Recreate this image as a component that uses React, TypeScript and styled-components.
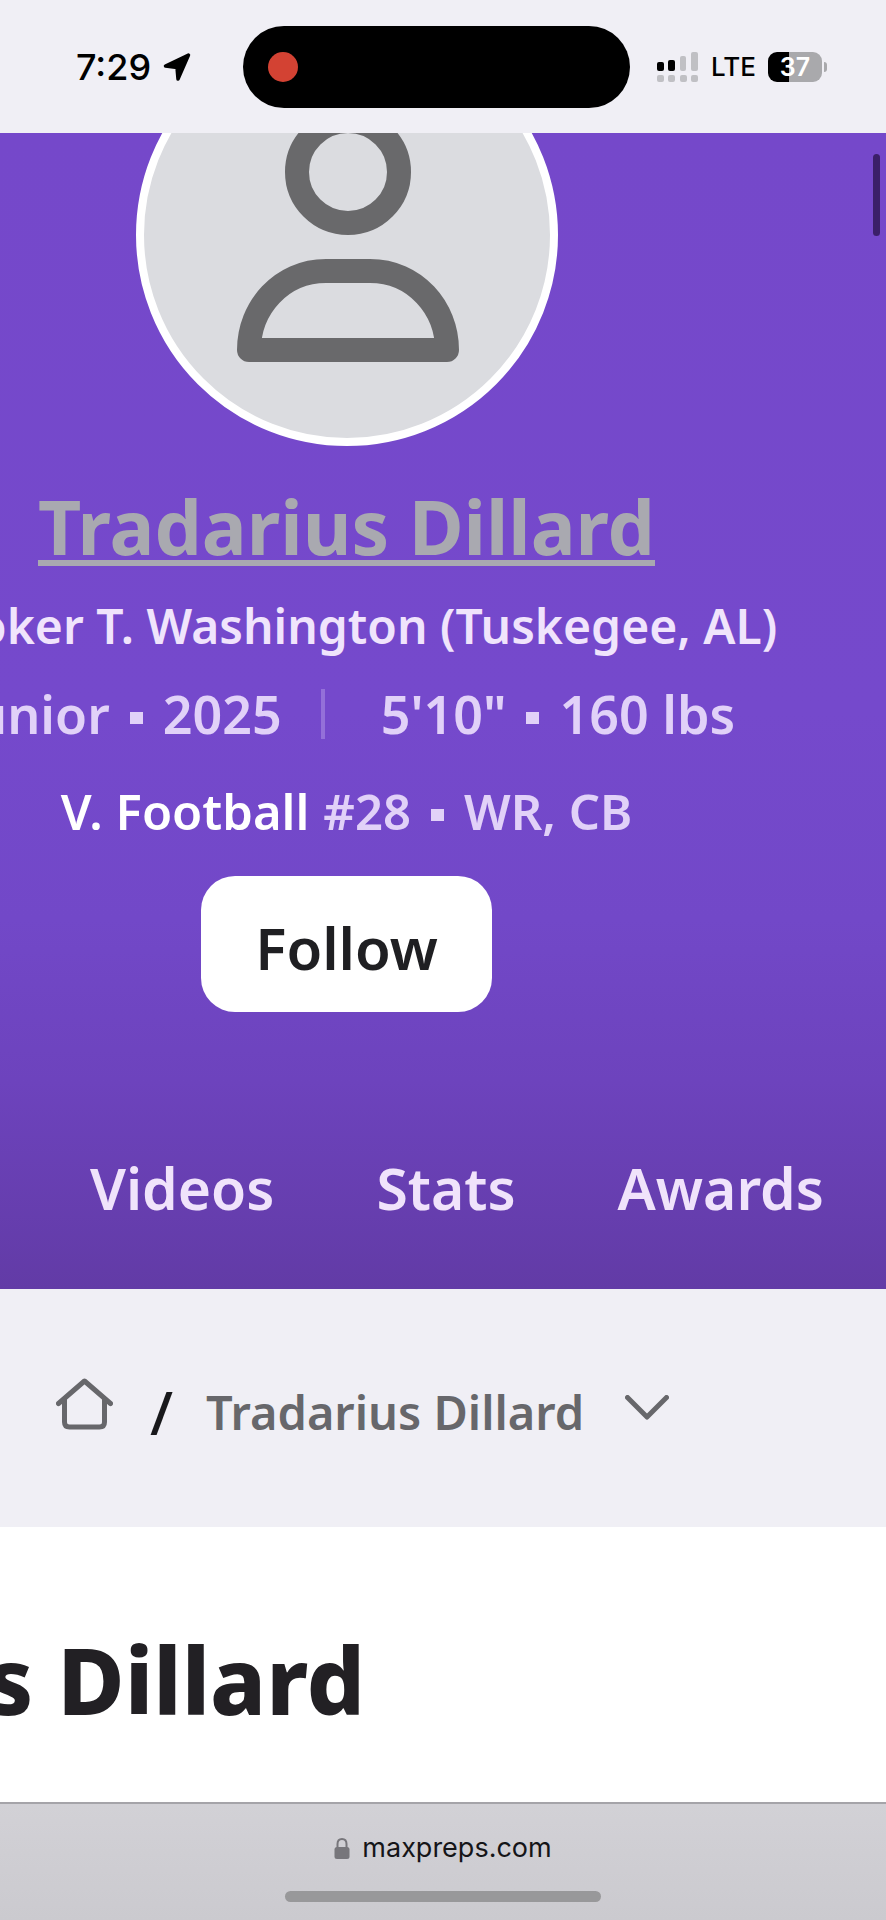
import React from "react";
import styled, { createGlobalStyle } from "styled-components";

const BRAND_FONT = `"Noto Sans", "Open Sans", sans-serif`;
const SYSTEM_FONT = `Inter, "Liberation Sans", sans-serif`;

const GlobalStyle = createGlobalStyle`
  *, *::before, *::after { box-sizing: border-box; }
  html, body, #root { height: 100%; }
  body { margin: 0; background: #f0eff5; font-family: ${BRAND_FONT}; }
  h1, h2, p { margin: 0; }
  a { color: inherit; text-decoration: none; }
  svg { display: block; flex: none; }
`;

const Screen = styled.div`
  display: flex;
  flex-direction: column;
  min-height: 100%;
  overflow: hidden;
`;

/* ---------- status bar ---------- */

const StatusBar = styled.header`
  display: grid;
  grid-template-columns: 243px 387px 1fr;
  align-items: center;
  height: 133px;
  background: #f0eff5;
  color: #000;
  font-family: ${SYSTEM_FONT};
  font-weight: 500;
`;

const StatusGroup = styled.div<{ $gap: number; $start: number }>`
  display: flex;
  align-items: center;
  gap: ${(p) => p.$gap}px;
  padding-left: ${(p) => p.$start}px;
`;

const Clock = styled.time`
  font-size: 36px;
  line-height: 40px;
`;

const Carrier = styled.span`
  font-size: 26px;
  line-height: 32px;
`;

const Island = styled.div`
  display: flex;
  align-items: center;
  height: 82px;
  padding-left: 25px;
  border-radius: 41px;
  background: #000;
`;

const RecordingDot = styled.span`
  width: 30px;
  height: 30px;
  border-radius: 50%;
  background: #d34233;
`;

const Battery = styled.span`
  position: relative;
  display: flex;
  align-items: center;
  justify-content: center;
  width: 54px;
  height: 30px;
  border-radius: 9px;
  background: linear-gradient(90deg, #000 38%, #a9a9ac 38%);
  color: #fff;
  font-size: 25px;
  font-weight: 600;
  line-height: 30px;

  &::after {
    content: "";
    position: absolute;
    right: -5px;
    width: 3px;
    height: 10px;
    border-radius: 0 5px 5px 0;
    background: #a9a9ac;
  }
`;

/* ---------- profile header ---------- */

const Hero = styled.section`
  position: relative;
  overflow: hidden;
  background: linear-gradient(180deg, #7548ca 0%, #7549cc 50%, #7248c8 68%, #6d43bd 82%, #623ba6 100%);
  color: #e1d1f8;
`;

/* The page is zoomed in and scrolled, so its centre line is left of the window's. */
const Profile = styled.div`
  display: flex;
  flex-direction: column;
  align-items: center;
  margin-left: -193px;
  white-space: nowrap;
`;

const Avatar = styled.div`
  display: flex;
  justify-content: center;
  width: 422px;
  height: 422px;
  margin-top: -109px;
  border: 8px solid #fff;
  border-radius: 50%;
  background: #dbdce0;
`;

const PlayerName = styled.h1`
  margin: 36px 0 20px;
  color: #a9a9b0;
  font-size: 75px;
  font-weight: 700;
  line-height: 88px;

  a {
    text-decoration: underline;
    text-decoration-thickness: 6px;
    text-underline-offset: 5px;
    text-decoration-skip-ink: none;
  }
`;

const InfoLine = styled.p<{ $after: number; $size: number }>`
  display: flex;
  align-items: center;
  margin-bottom: ${(p) => p.$after}px;
  font-size: ${(p) => p.$size}px;
  font-weight: 600;
  line-height: 72px;
`;

const School = styled.a`
  color: #f0e4fc;
`;

const Team = styled.a`
  margin-right: 14px;
  color: #fff;
`;

const Divider = styled.span`
  width: 4px;
  height: 50px;
  margin: 0 56px 0 39px;
  background: #9470d9;
`;

const Square = styled.span`
  width: 13px;
  height: 12px;
  margin: 8px 20px 0;
  background: currentColor;
`;

const FollowButton = styled.button`
  height: 136px;
  padding: 8px 54px 0;
  border: 0;
  border-radius: 34px;
  background: #fff;
  color: #1f1f22;
  font: 600 58px/80px ${BRAND_FONT};
`;

const Tabs = styled.nav`
  display: flex;
  gap: 102px;
  padding: 136px 0 61px 90px;
  color: #f0e3fb;
  font-size: 57px;
  font-weight: 600;
  line-height: 80px;
`;

const ScrollThumb = styled.span`
  position: absolute;
  top: 21px;
  right: 6px;
  width: 7px;
  height: 82px;
  border-radius: 4px;
  background: #3b1f69;
`;

/* ---------- breadcrumb ---------- */

const Breadcrumb = styled.nav`
  display: flex;
  align-items: center;
  height: 238px;
  padding: 8px 0 0 56px;
  color: #67676b;
`;

const HomeLink = styled.a`
  padding-bottom: 16px;
`;

const Slash = styled.span`
  margin: 0 33px 0 37px;
  color: #18181b;
  font-size: 60px;
  font-weight: 500;
  line-height: 60px;
`;

const CrumbButton = styled.button`
  display: flex;
  align-items: center;
  gap: 41px;
  padding: 0;
  border: 0;
  background: none;
  color: inherit;
  font: 600 47px/66px ${BRAND_FONT};

  svg { margin-bottom: 10px; }
`;

/* ---------- article ---------- */

const Article = styled.main`
  flex: 1;
  padding-top: 103px;
  background: #fff;
`;

const ArticleTitle = styled.h2`
  margin-left: -405px;
  color: #222024;
  font-size: 92px;
  font-weight: 800;
  line-height: 100px;
  white-space: nowrap;
`;

/* ---------- browser bar ---------- */

const BrowserBar = styled.footer`
  display: flex;
  flex-direction: column;
  align-items: center;
  justify-content: space-between;
  height: 118px;
  padding: 26px 0 18px;
  border-top: 2px solid #a5a4a9;
  background: linear-gradient(180deg, #d2d1d6, #cbcacf);
  font-family: ${SYSTEM_FONT};
`;

const Address = styled.a`
  display: flex;
  align-items: center;
  gap: 12px;
  color: #151518;
  font-size: 27px;
  line-height: 36px;
`;

const HomeIndicator = styled.span`
  width: 316px;
  height: 11px;
  border-radius: 6px;
  background: #98989a;
`;

const LocationArrow = () => (
  <svg width="28" height="28" viewBox="0 0 28 28" aria-hidden="true">
    <path
      d="M25.500 2 2.500 13 14 14.500 15 26Z"
      fill="#000"
      stroke="#000"
      strokeWidth="3.500"
      strokeLinejoin="round"
    />
  </svg>
);

const SignalIcon = () => (
  <svg width="42" height="30" viewBox="0 0 42 30" aria-label="Signal">
    <g fill="#000">
      <rect x="0" y="10" width="7" height="9" rx="2" />
      <rect x="11" y="8" width="7" height="11" rx="2" />
    </g>
    <g fill="#c0c0c4">
      <rect x="23" y="4" width="6" height="15" rx="2" />
      <rect x="34" y="0" width="7" height="19" rx="2" />
      {[0, 11, 23, 34].map((x) => (
        <rect key={x} x={x} y="23" width="7" height="7" rx="2" />
      ))}
    </g>
  </svg>
);

const PersonIcon = () => (
  <svg width="406" height="406" viewBox="0 0 406 406" fill="none" stroke="#69696b" strokeWidth="24" strokeLinejoin="round" aria-hidden="true">
    <circle cx="204" cy="140" r="51" />
    <path d="M105 318C105 276 137 239 182 239H226C271 239 303 276 303 318Z" />
  </svg>
);

const HomeIcon = () => (
  <svg width="57" height="52" viewBox="0 0 57 52" fill="none" stroke="#67676b" strokeWidth="5" strokeLinecap="round" strokeLinejoin="round" aria-hidden="true">
    <path d="M2.500 25.500 28.500 3 54.500 25.500" />
    <path d="M8.500 21V44Q8.500 49 13.500 49H43.500Q48.500 49 48.500 44V21" />
  </svg>
);

const ChevronIcon = () => (
  <svg width="44" height="25" viewBox="0 0 44 25" fill="none" stroke="#67676b" strokeWidth="5" strokeLinecap="round" strokeLinejoin="round" aria-hidden="true">
    <path d="M2.500 2.500 22 22 41.500 2.500" />
  </svg>
);

const LockIcon = () => (
  <svg width="16" height="21" viewBox="0 0 16 21" aria-hidden="true">
    <path d="M3.500 10V6Q3.500 1 8 1T12.500 6V10" fill="none" stroke="#77767b" strokeWidth="2" />
    <rect x="0.500" y="9" width="15" height="12" rx="2.500" fill="#77767b" />
  </svg>
);

export default function App() {
  return (
    <Screen>
      <GlobalStyle />
      <StatusBar>
        <StatusGroup $gap={12} $start={76}>
          <Clock>7:29</Clock>
          <LocationArrow />
        </StatusGroup>
        <Island>
          <RecordingDot />
        </Island>
        <StatusGroup $gap={12} $start={27}>
          <SignalIcon />
          <Carrier>LTE</Carrier>
          <Battery>37</Battery>
        </StatusGroup>
      </StatusBar>

      <Hero>
        <Profile>
          <Avatar>
            <PersonIcon />
          </Avatar>
          <PlayerName>
            <a href="#profile">Tradarius Dillard</a>
          </PlayerName>
          <InfoLine $size={48} $after={16}>
            <School href="#school">Booker T. Washington (Tuskegee, AL)</School>
          </InfoLine>
          <InfoLine $size={52} $after={25}>
            <span>Junior</span>
            <Square />
            <span>2025</span>
            <Divider />
            <span>5'10"</span>
            <Square />
            <span>160 lbs</span>
          </InfoLine>
          <InfoLine $size={49} $after={29}>
            <Team href="#team">V. Football</Team>
            <span>#28</span>
            <Square />
            <span>WR, CB</span>
          </InfoLine>
          <FollowButton type="button">Follow</FollowButton>
        </Profile>
        <Tabs>
          <a href="#videos">Videos</a>
          <a href="#stats">Stats</a>
          <a href="#awards">Awards</a>
        </Tabs>
        <ScrollThumb />
      </Hero>

      <Breadcrumb>
        <HomeLink href="#home" aria-label="Home">
          <HomeIcon />
        </HomeLink>
        <Slash>/</Slash>
        <CrumbButton type="button">
          Tradarius Dillard
          <ChevronIcon />
        </CrumbButton>
      </Breadcrumb>

      <Article>
        <ArticleTitle>Tradarius Dillard</ArticleTitle>
      </Article>

      <BrowserBar>
        <Address href="#address">
          <LockIcon />
          maxpreps.com
        </Address>
        <HomeIndicator />
      </BrowserBar>
    </Screen>
  );
}
